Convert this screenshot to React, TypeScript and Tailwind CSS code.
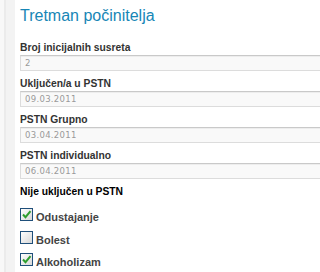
const fields = [
  { label: 'Broj inicijalnih susreta', value: '2' },
  { label: 'Uključen/a u PSTN', value: '09.03.2011' },
  { label: 'PSTN Grupno', value: '03.04.2011' },
  { label: 'PSTN individualno', value: '06.04.2011' },
];

const reasons = [
  { label: 'Odustajanje', checked: true },
  { label: 'Bolest', checked: false },
  { label: 'Alkoholizam', checked: true },
];

const CheckBox = ({ checked }: { checked: boolean }) => (
  <div className="relative w-[13px] h-[13px] shrink-0 border border-[#1f4f7a] bg-gradient-to-br from-white to-[#d8d8d8]">
    {checked && (
      <svg viewBox="0 0 11 11" className="absolute inset-0 w-[11px] h-[11px]">
        <path d="M2 5.5 L4.5 8.2 L9.5 2.2" fill="none" stroke="#2e9e2e" strokeWidth="2" />
      </svg>
    )}
  </div>
);

export default function App() {
  return (
    <div className="flex w-full min-h-[272px] overflow-hidden bg-white font-['Liberation_Sans',Arial,sans-serif]">
      {/* sidebar edge */}
      <div className="w-[4px] shrink-0 bg-[#f8f8f8]" />
      <div className="w-[2px] shrink-0 bg-[#ebebeb]" />
      <div className="w-[9px] shrink-0 bg-[#f3f3f3]" />

      <div className="flex-1 min-w-0 pl-[5px] overflow-hidden">
        <h1 className="mt-[6px] mb-[14px] text-[16px] leading-[20px] text-[#1786b6] whitespace-nowrap">
          Tretman počinitelja
        </h1>

        {fields.map((f) => (
          <div key={f.label} className="mb-[5px]">
            <div className="text-[10.3px] leading-[15px] font-bold text-[#333] whitespace-nowrap">{f.label}</div>
            <div className="w-[calc(100%+8px)] h-[16px] flex items-center pl-[4px] border border-[#dcdcdc] border-t-[#c9c9c9] bg-[#f9f9f9] shadow-[inset_0_1px_0_#ededed]">
              <span className="font-['DejaVu_Sans',sans-serif] text-[8.5px] tracking-[0.3px] text-[#999] leading-none">
                {f.value}
              </span>
            </div>
          </div>
        ))}

        <div className="text-[10.3px] leading-[15px] font-bold text-black whitespace-nowrap">Nije uključen u PSTN</div>

        <div className="mt-[7px]">
          {reasons.map((r) => (
            <div key={r.label} className="flex items-baseline gap-[3px] leading-[22.5px]">
              <CheckBox checked={r.checked} />
              <span className="text-[11px] font-bold text-[#444] whitespace-nowrap">{r.label}</span>
            </div>
          ))}
        </div>
      </div>
    </div>
  );
}
